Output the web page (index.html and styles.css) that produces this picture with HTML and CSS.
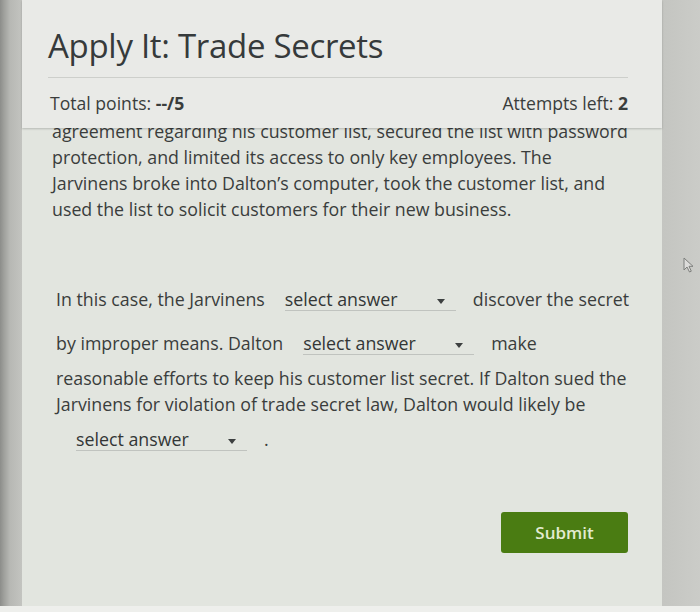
FILE: index.html
```html
<!DOCTYPE html>
<html lang="en">
<head>
<meta charset="utf-8">
<title>Apply It: Trade Secrets</title>
<link rel="stylesheet" href="styles.css">
</head>
<body>
<div class="screen">
  <div class="edge-left"></div>
  <main class="panel">
    <header class="panel-head">
      <h1 class="title">Apply It: Trade Secrets</h1>
      <div class="meta">
        <span>Total points: <b>--/5</b></span>
        <span>Attempts left: <b>2</b></span>
      </div>
    </header>
    <div class="scroll">
      <div class="scroll-inner">
        <p class="intro">agreement regarding his customer list, secured the list with password<br>
          protection, and limited its access to only key employees. The<br>
          Jarvinens broke into Dalton’s computer, took the customer list, and<br>
          used the list to solicit customers for their new business.</p>
        <p class="question">In this case, the Jarvinens<span class="select">select answer<i class="caret"></i></span>discover the secret<br>
          by improper means. Dalton<span class="select">select answer<i class="caret"></i></span>make<br>
          reasonable efforts to keep his customer list secret. If Dalton sued the<br>
          Jarvinens for violation of trade secret law, Dalton would likely be<br>
          <span class="select">select answer<i class="caret"></i></span>.</p>
        <div class="actions">
          <button class="submit" type="button">Submit</button>
        </div>
      </div>
    </div>
  </main>
  <div class="edge-right">
    <svg class="pointer" width="12" height="16" viewBox="0 0 12 16">
      <path d="M1 1 L1 13 L4 10 L6.5 15 L8.3 14.2 L6 9.3 L10 9.3 Z" fill="#dcdcda" stroke="#7d7f7c" stroke-width="1"/>
    </svg>
  </div>
</div>
<div class="bottom-edge"></div>
</body>
</html>
```

FILE: styles.css
```css
html, body {
  margin: 0;
  padding: 0;
}

body {
  width: 700px;
  height: 612px;
  overflow: hidden;
  background: #c8c9c5;
  font-family: "Open Sans", "Noto Sans", sans-serif;
  color: #3a3d3c;
}

.screen {
  display: flex;
  height: 606px;
}

.edge-left {
  width: 22px;
  flex: none;
  background: linear-gradient(to right, #8c8d8a 0, #9fa09c 4px, #b7b8b4 10px, #c3c4c0 22px);
}

.panel {
  width: 640px;
  flex: none;
  display: flex;
  flex-direction: column;
  background: #e2e5df;
  position: relative;
}

.panel-head {
  height: 128px;
  box-sizing: border-box;
  padding: 22px 34px 0 26px;
  background: #e9eae7;
  box-shadow: 0 1px 2px rgba(0, 0, 0, 0.2);
  position: relative;
  z-index: 2;
  flex: none;
}

.title {
  margin: 0;
  font-weight: 400;
  font-size: 33px;
  line-height: 48px;
  color: #363a3b;
  letter-spacing: -0.3px;
  padding-bottom: 7px;
  border-bottom: 1px solid #cdcfcb;
}

.meta {
  display: flex;
  justify-content: space-between;
  font-size: 17.6px;
  line-height: 24px;
  margin-top: 13px;
  padding-left: 2px;
}

.meta b {
  font-weight: 700;
}

.scroll {
  flex: 1;
  overflow: hidden;
  position: relative;
  z-index: 1;
}

.scroll-inner {
  margin-top: -10px;
  padding: 0 28px 0 30px;
}

.intro {
  margin: 0;
  font-size: 17.8px;
  line-height: 26px;
  white-space: nowrap;
}

.question {
  margin: 55px 0 0 4px;
  font-size: 17.8px;
  line-height: 26px;
  white-space: nowrap;
}

/* inline dropdown: underlined text with a small caret on the right */
.select {
  display: inline-block;
  position: relative;
  box-sizing: border-box;
  width: 171px;
  padding: 12px 0 1px 0;
  margin: 0 17px 10px 20px;
  border-bottom: 1px solid #c0c3bf;
  line-height: 20px;
  color: #333636;
}

.caret {
  position: absolute;
  right: 11px;
  top: 22px;
  width: 0;
  height: 0;
  border-left: 4px solid transparent;
  border-right: 4px solid transparent;
  border-top: 5px solid #3d4040;
}

.actions {
  display: flex;
  justify-content: flex-end;
  margin-top: 51px;
}

.submit {
  width: 127px;
  height: 41px;
  margin-right: 6px;
  border: none;
  border-radius: 3px;
  background: #4a7c12;
  color: #e2ebd0;
  font-family: "Open Sans", "Noto Sans", sans-serif;
  font-size: 17px;
  font-weight: 600;
}

.edge-right {
  flex: 1;
  background: linear-gradient(to right, #c4c5c1, #cbccc8);
  position: relative;
}

.pointer {
  position: absolute;
  left: 21px;
  top: 257px;
}

.bottom-edge {
  height: 6px;
  background: #eeefec;
}
```
